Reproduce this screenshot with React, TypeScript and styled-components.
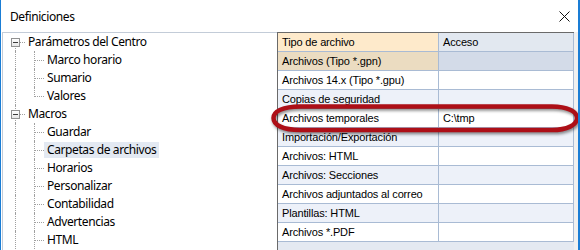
import styled, { createGlobalStyle } from "styled-components";

const GlobalStyle = createGlobalStyle`
  html, body {
    margin: 0;
    padding: 0;
    background: #ffffff;
  }
`;

const Window = styled.div`
  position: relative;
  width: 580px;
  height: 250px;
  box-sizing: border-box;
  border-left: 1px solid #1a7dd5;
  border-right: 2px solid #1a7dd5;
  background: #ffffff;
  overflow: hidden;
  display: flex;
  flex-direction: column;
  font-family: "Noto Sans", "Open Sans", sans-serif;
  letter-spacing: -0.4px;
`;

const TitleBar = styled.div`
  height: 32px;
  flex: none;
  display: flex;
  align-items: center;
  padding: 0 8px 0 9px;
  font-size: 12px;
  color: #000;
`;

const CloseButton = styled.div`
  margin-left: auto;
  width: 12px;
  height: 12px;
  display: flex;
  align-items: center;
  justify-content: center;
`;

const Body = styled.div`
  flex: 1;
  display: flex;
  min-height: 0;
`;

const TreePanel = styled.div`
  width: 275px;
  margin-left: 1px;
  box-sizing: border-box;
  border-left: 1px solid #c3ccd8;
  border-top: 1px solid #c3ccd8;
  display: flex;
  flex-direction: column;
  font-size: 12px;
  color: #000;
`;

const TreeRow = styled.div`
  height: 18px;
  display: flex;
  align-items: center;
`;

const Guide = styled.div<{ $w: number; $x: number; $from: number; $to: number; $dash?: number; $dashW?: number }>`
  position: relative;
  width: ${(p) => p.$w}px;
  height: 18px;
  flex: none;

  &::before {
    content: "";
    display: ${(p) => (p.$to > p.$from ? "block" : "none")};
    position: absolute;
    left: ${(p) => p.$x}px;
    top: ${(p) => p.$from}px;
    height: ${(p) => p.$to - p.$from}px;
    border-left: 1px dotted #a0a0a0;
  }

  &::after {
    content: "";
    display: ${(p) => (p.$dashW ? "block" : "none")};
    position: absolute;
    left: ${(p) => p.$dash ?? 0}px;
    top: 9px;
    width: ${(p) => p.$dashW ?? 0}px;
    border-top: 1px dotted #a0a0a0;
  }
`;

const ExpandBox = styled.div`
  position: absolute;
  left: 8px;
  top: 5px;
  width: 7px;
  height: 7px;
  border: 1px solid #919191;
  background: linear-gradient(#ffffff, #e6e6e6);
  z-index: 1;

  &::after {
    content: "";
    position: absolute;
    left: 1px;
    top: 3px;
    width: 5px;
    height: 1px;
    background: #3c3c3c;
  }
`;

const Label = styled.span<{ $selected?: boolean }>`
  padding: 0 3px;
  height: 16px;
  line-height: 16px;
  white-space: nowrap;
  background: ${(p) => (p.$selected ? "#e3e9f2" : "transparent")};
`;

const GridPanel = styled.div`
  width: 297px;
  box-sizing: border-box;
  border-left: 1px solid #6a6a6a;
  border-top: 1px solid #6a6a6a;
  background: #e4e9f1;
  font-family: "Liberation Sans", Arial, sans-serif;
  font-size: 11px;
  letter-spacing: -0.15px;
  color: #000;
`;

const GridRow = styled.div`
  display: flex;
  height: 19px;
`;

const Cell = styled.div<{ $bg: string; $w: number }>`
  width: ${(p) => p.$w}px;
  box-sizing: border-box;
  padding-left: 4px;
  height: 19px;
  line-height: 18px;
  background: ${(p) => p.$bg};
  border-right: 1px solid #a9bbd4;
  border-bottom: 1px solid #a9bbd4;
  white-space: nowrap;
  overflow: hidden;
`;

const Spacer = styled.div`
  flex: 1;
  background: #f0f0f0;
`;

// red marker drawn over the grid
const Highlight = styled.svg`
  position: absolute;
  left: 269px;
  top: 102px;
  filter: drop-shadow(1px 2px 1.5px rgba(0, 0, 0, 0.45));
`;

type Group = { label: string; children: string[]; more?: boolean };

const tree: Group[] = [
  { label: "Parámetros del Centro", children: ["Marco horario", "Sumario", "Valores"] },
  {
    label: "Macros",
    children: ["Guardar", "Carpetas de archivos", "Horarios", "Personalizar", "Contabilidad", "Advertencias", "HTML"],
    more: true,
  },
];

const rows: { tipo: string; acceso: string }[] = [
  { tipo: "Archivos (Tipo *.gpn)", acceso: "" },
  { tipo: "Archivos 14.x (Tipo *.gpu)", acceso: "" },
  { tipo: "Copias de seguridad", acceso: "" },
  { tipo: "Archivos temporales", acceso: "C:\\tmp" },
  { tipo: "Importación/Exportación", acceso: "" },
  { tipo: "Archivos: HTML", acceso: "" },
  { tipo: "Archivos: Secciones", acceso: "" },
  { tipo: "Archivos adjuntados al correo", acceso: "" },
  { tipo: "Plantillas: HTML", acceso: "" },
  { tipo: "Archivos *.PDF", acceso: "" },
];

const Tree = () => (
  <TreePanel>
    {tree.map((g, gi) => (
      <div key={g.label}>
        <TreeRow>
          <Guide $w={22} $x={12} $from={gi === 0 ? 9 : 0} $to={18} $dash={17} $dashW={5}>
            <ExpandBox />
          </Guide>
          <Label>{g.label}</Label>
        </TreeRow>
        {g.children.map((c, ci) => {
          const last = ci === g.children.length - 1 && !g.more;
          return (
            <TreeRow key={c}>
              <Guide $w={22} $x={12} $from={0} $to={18} />
              <Guide $w={19} $x={9} $from={0} $to={last ? 10 : 18} $dash={10} $dashW={9} />
              <Label $selected={c === "Carpetas de archivos"}>{c}</Label>
            </TreeRow>
          );
        })}
      </div>
    ))}
  </TreePanel>
);

const Grid = () => (
  <GridPanel>
    <GridRow>
      <Cell $w={161} $bg="#feeacb">Tipo de archivo</Cell>
      <Cell $w={135} $bg="#e2e8f0">Acceso</Cell>
    </GridRow>
    {rows.map((r, i) => {
      const selected = i === 0;
      const alt = i % 2 === 0;
      return (
        <GridRow key={r.tipo}>
          <Cell $w={161} $bg={selected ? "#ebdcc1" : alt ? "#edf1f9" : "#ffffff"}>{r.tipo}</Cell>
          <Cell $w={135} $bg={selected ? "#d3dbe8" : alt ? "#edf1f9" : "#ffffff"}>{r.acceso}</Cell>
        </GridRow>
      );
    })}
  </GridPanel>
);

export default function App() {
  return (
    <>
      <GlobalStyle />
      <Window>
        <TitleBar>
          Definiciones
          <CloseButton>
            <svg width="11" height="11" viewBox="0 0 11 11">
              <path d="M0.5 0.5 L10.5 10.5 M10.5 0.5 L0.5 10.5" stroke="#111" strokeWidth="1" />
            </svg>
          </CloseButton>
        </TitleBar>
        <Body>
          <Tree />
          <Grid />
          <Spacer />
        </Body>
        <Highlight width="312" height="34" viewBox="0 0 312 34">
          <path
            d="M30 4.5 H282 C297 4.5 307 9.5 307 16 C307 23 297 28 282 28 H30 C13 28 3.5 23 3.5 16 C3.5 9.5 13 4.5 30 4.5 Z"
            fill="none"
            stroke="#ad0f17"
            strokeWidth="4.5"
          />
        </Highlight>
      </Window>
    </>
  );
}
